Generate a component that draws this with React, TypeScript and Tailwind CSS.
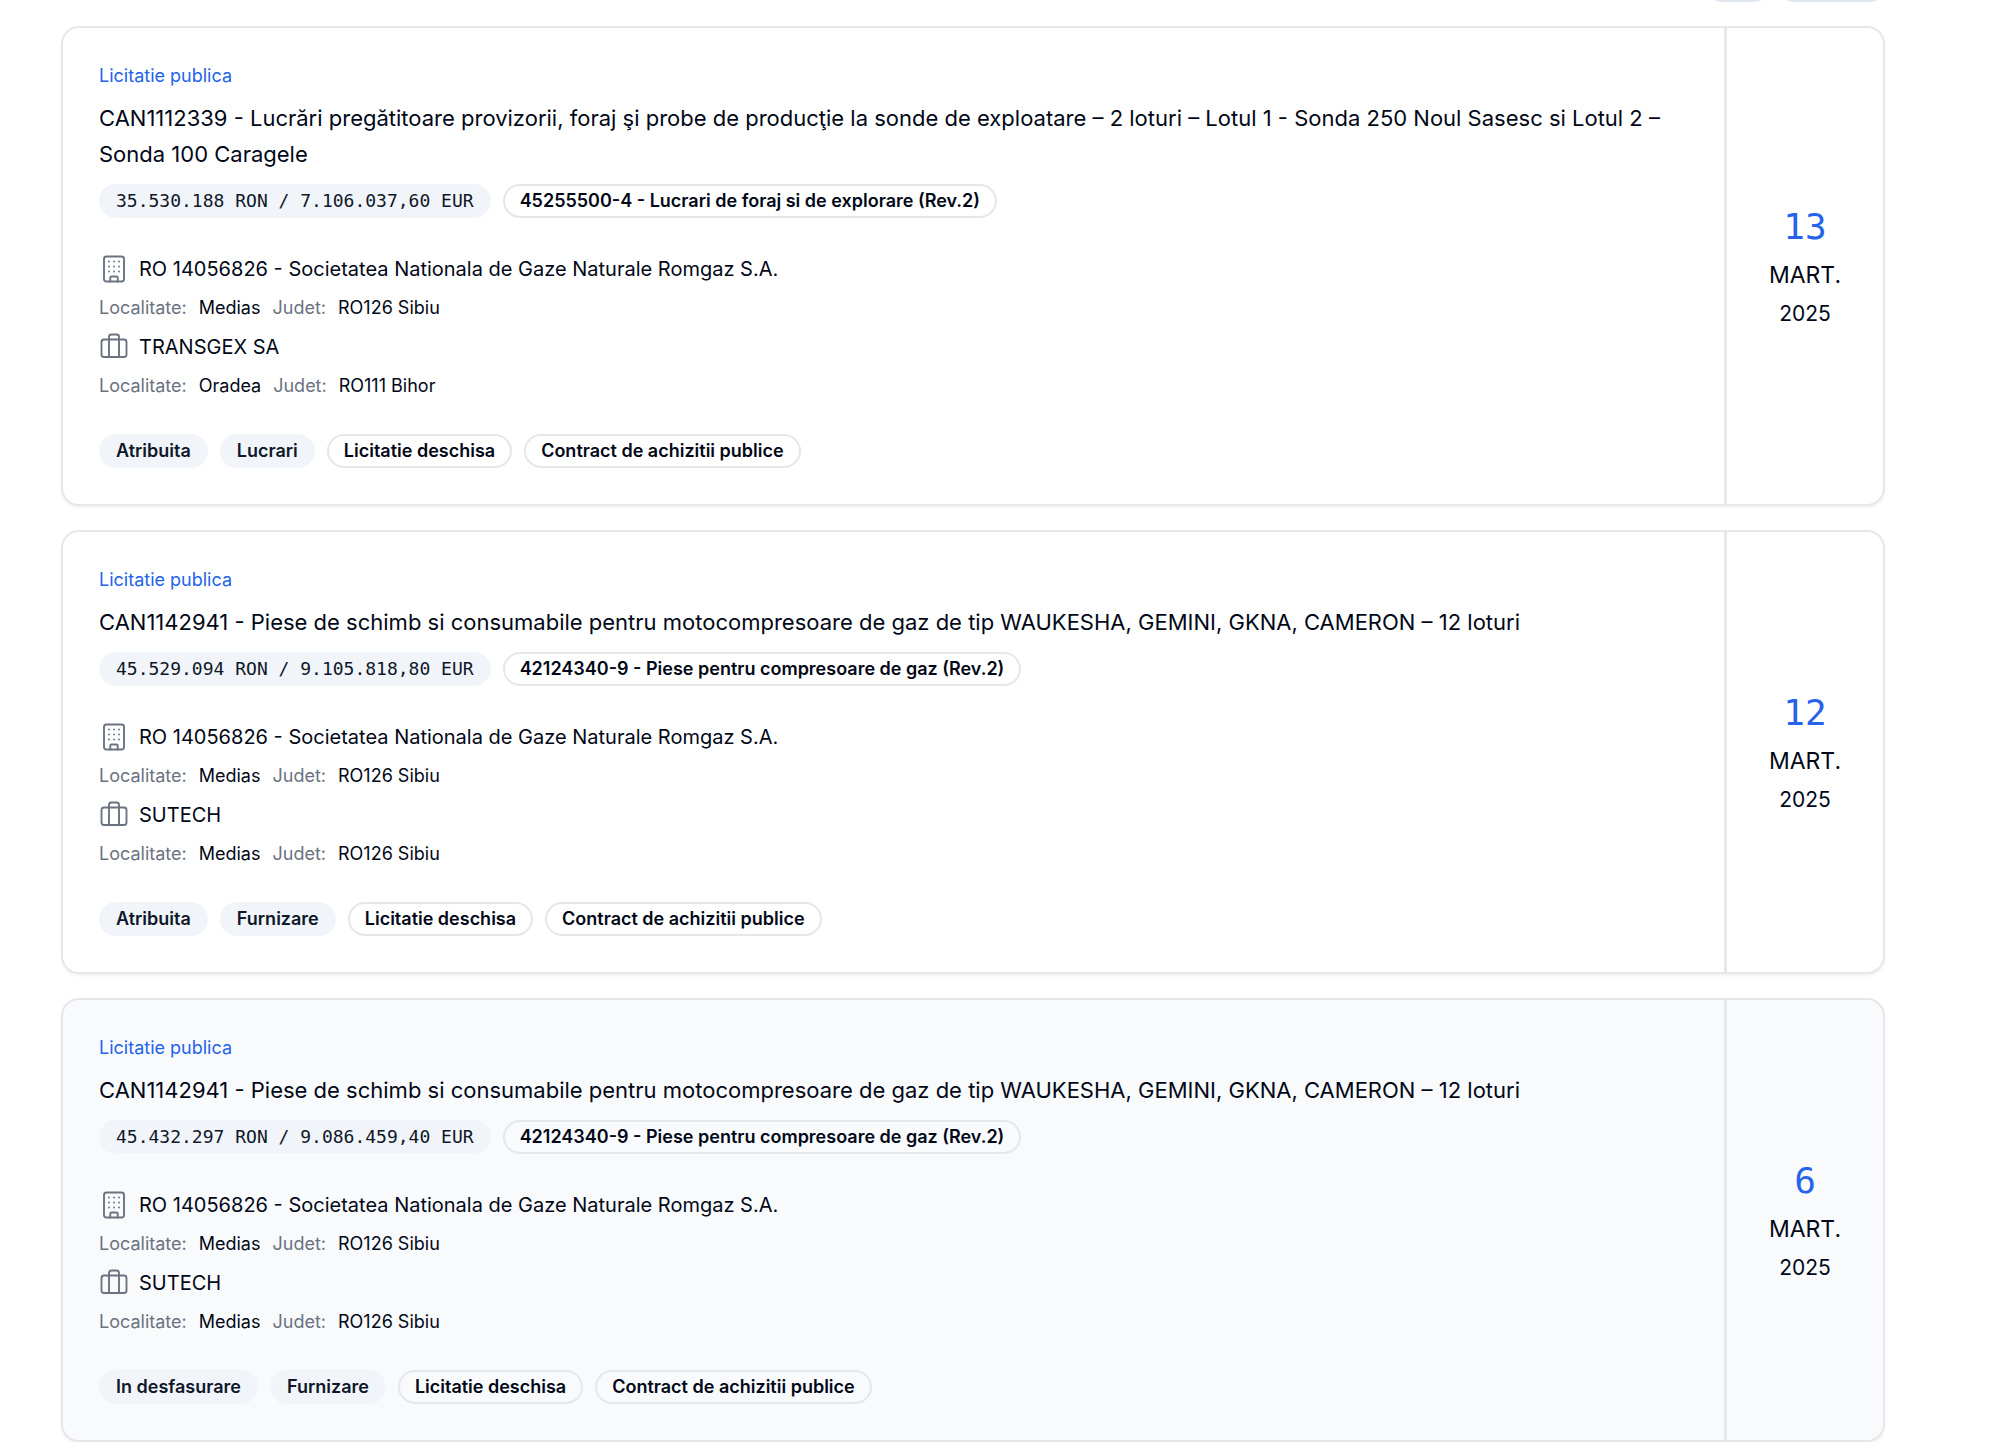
import { Briefcase, Building } from "lucide-react";

type Place = { city: string; county: string };

type Tender = {
  title: string;
  value: string;
  cpv: string;
  authority: string;
  authorityPlace: Place;
  supplier: string;
  supplierPlace: Place;
  status: string;
  kind: string;
  day: string;
  muted?: boolean;
};

const medias: Place = { city: "Medias", county: "RO126 Sibiu" };
const romgaz = "RO 14056826 - Societatea Nationala de Gaze Naturale Romgaz S.A.";
const spareParts =
  "CAN1142941 - Piese de schimb si consumabile pentru motocompresoare de gaz de tip WAUKESHA, GEMINI, GKNA, CAMERON – 12 loturi";

const tenders: Tender[] = [
  {
    title:
      "CAN1112339 - Lucrări pregătitoare provizorii, foraj şi probe de producţie la sonde de exploatare – 2 loturi – Lotul 1 - Sonda 250 Noul Sasesc si Lotul 2 – Sonda 100 Caragele",
    value: "35.530.188 RON / 7.106.037,60 EUR",
    cpv: "45255500-4 - Lucrari de foraj si de explorare (Rev.2)",
    authority: romgaz,
    authorityPlace: medias,
    supplier: "TRANSGEX SA",
    supplierPlace: { city: "Oradea", county: "RO111 Bihor" },
    status: "Atribuita",
    kind: "Lucrari",
    day: "13",
  },
  {
    title: spareParts,
    value: "45.529.094 RON / 9.105.818,80 EUR",
    cpv: "42124340-9 - Piese pentru compresoare de gaz (Rev.2)",
    authority: romgaz,
    authorityPlace: medias,
    supplier: "SUTECH",
    supplierPlace: medias,
    status: "Atribuita",
    kind: "Furnizare",
    day: "12",
  },
  {
    title: spareParts,
    value: "45.432.297 RON / 9.086.459,40 EUR",
    cpv: "42124340-9 - Piese pentru compresoare de gaz (Rev.2)",
    authority: romgaz,
    authorityPlace: medias,
    supplier: "SUTECH",
    supplierPlace: medias,
    status: "In desfasurare",
    kind: "Furnizare",
    day: "6",
    muted: true,
  },
];

function Filled({ children, mono }: { children: string; mono?: boolean }) {
  return (
    <span
      className={`rounded-full border-2 border-[#f1f5f9] bg-[#f1f5f9] px-[15px] py-[3px] text-[18px] leading-6 text-[#0f172a] ${
        mono ? "font-['DejaVu_Sans_Mono',monospace]" : "font-semibold"
      }`}
    >
      {children}
    </span>
  );
}

function Outlined({ children }: { children: string }) {
  return (
    <span className="rounded-full border-2 border-[#e5e7eb] px-[15px] py-[3px] text-[18px] leading-6 font-semibold">
      {children}
    </span>
  );
}

function PlaceRow({ place }: { place: Place }) {
  return (
    <dl className="flex gap-3 text-[18px] leading-6">
      <dt className="text-[#6b7280]">Localitate:</dt>
      <dd>{place.city}</dd>
      <dt className="text-[#6b7280]">Judet:</dt>
      <dd>{place.county}</dd>
    </dl>
  );
}

function TenderCard({ tender }: { tender: Tender }) {
  return (
    <article
      className={`flex rounded-[18px] border-2 border-[#e5e7eb] shadow-[0_2px_3px_rgba(0,0,0,0.05)] ${
        tender.muted ? "bg-[#f8fafc]" : "bg-white"
      }`}
    >
      <div className="flex min-w-0 flex-1 flex-col gap-9 p-9">
        <div className="flex flex-col gap-3">
          <p className="text-[18px] leading-6 text-[#2563eb]">Licitatie publica</p>
          <h2 className="text-[22px] leading-9">{tender.title}</h2>
          <div className="flex flex-wrap gap-3">
            <Filled mono>{tender.value}</Filled>
            <Outlined>{tender.cpv}</Outlined>
          </div>
        </div>
        <div className="flex flex-col gap-3">
          <p className="flex items-center gap-2.5 text-[20px] leading-[30px]">
            <Building size={30} strokeWidth={1.5} className="shrink-0 text-[#6b7280]" />
            {tender.authority}
          </p>
          <PlaceRow place={tender.authorityPlace} />
          <p className="flex items-center gap-2.5 text-[20px] leading-[30px]">
            <Briefcase size={30} strokeWidth={1.5} className="shrink-0 text-[#6b7280]" />
            {tender.supplier}
          </p>
          <PlaceRow place={tender.supplierPlace} />
        </div>
        <div className="flex flex-wrap gap-3">
          <Filled>{tender.status}</Filled>
          <Filled>{tender.kind}</Filled>
          <Outlined>Licitatie deschisa</Outlined>
          <Outlined>Contract de achizitii publice</Outlined>
        </div>
      </div>
      <time className="flex w-[159px] shrink-0 flex-col items-center justify-center gap-[3px] border-l-3 border-[#e5e7eb]">
        <span className="font-['DejaVu_Sans_Mono',monospace] text-[36px] leading-[54px] text-[#2563eb]">
          {tender.day}
        </span>
        <span className="text-[23px] leading-9">MART.</span>
        <span className="text-[21px] leading-9">2025</span>
      </time>
    </article>
  );
}

export default function App() {
  return (
    <main className="flex flex-col gap-6 bg-white pr-[121px] pl-[61px] font-['Inter',sans-serif] text-[#020817]">
      <div className="flex h-0.5 items-end justify-end gap-2.5 overflow-hidden">
        <span className="h-9 w-[62px] shrink-0 rounded-[15px] bg-[#e2e8f0]" />
        <span className="h-9 w-[106px] shrink-0 rounded-[15px] bg-[#e2e8f0]" />
      </div>
      {tenders.map((tender, index) => (
        <TenderCard key={index} tender={tender} />
      ))}
    </main>
  );
}
